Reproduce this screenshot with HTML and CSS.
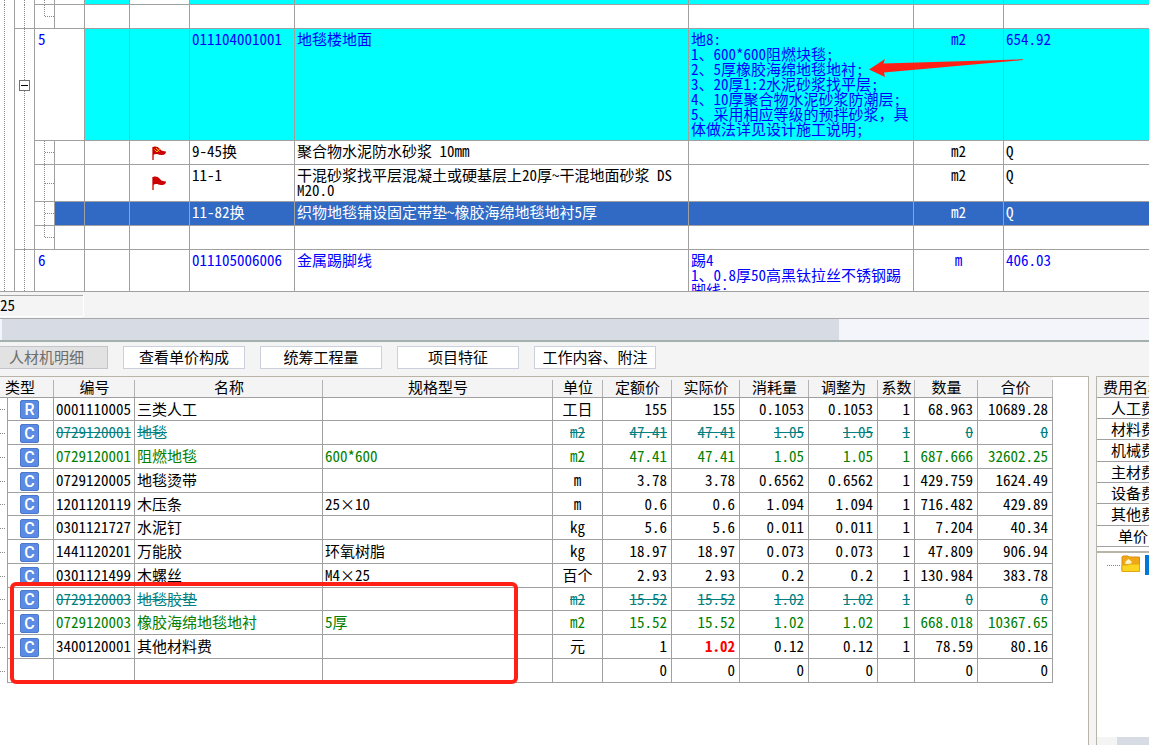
FILE: index.html
```html
<!DOCTYPE html>
<html lang="zh-CN">
<head>
<meta charset="utf-8">
<title>工程计价</title>
<link rel="stylesheet" href="styles.css">
</head>
<body>
<main class="app">
  <section class="bill">
    <table class="grid bill-table">
      <colgroup>
        <col class="w-root"><col class="w-branch"><col class="w-branch"><col class="w-index"><col class="w-mark"><col class="w-flag"><col class="w-code"><col class="w-name"><col class="w-feature"><col class="w-unit"><col>
      </colgroup>
      <tbody>
        <tr class="r-edge"><td class="trunk"></td><td class="trunk mid"></td><td class="trunk mid leaf"></td><td></td><td class="cyan"></td><td></td><td class="cyan"></td><td class="cyan"></td><td class="cyan"></td><td class="cyan"></td><td class="cyan"></td></tr>
        <tr class="r-one"><td class="trunk"></td><td class="trunk mid end"></td><td class="twig last"></td><td></td><td></td><td></td><td></td><td></td><td></td><td></td><td></td></tr>
        <tr class="r-item cyan-row"><td class="trunk"></td><td class="trunk mid toggle-cell"><button class="toggle" type="button" aria-label="折叠"></button></td><td colspan="2" class="no">5</td><td></td><td></td><td>011104001001</td><td>地毯楼地面</td><td>地8:<br>1、600*600阻燃块毯;<br>2、5厚橡胶海绵地毯地衬;<br>3、20厚1:2水泥砂浆找平层;<br>4、10厚聚合物水泥砂浆防潮层;<br>5、采用相应等级的预拌砂浆<span class="wide">，</span>具体做法详见设计施工说明;</td><td class="c">m2</td><td>654.92</td></tr>
        <tr class="r-one"><td class="trunk"></td><td class="trunk mid"></td><td class="twig"></td><td></td><td></td><td class="flag"><svg width="15" height="15" viewBox="0 0 15 15"><path d="M1 1v13" stroke="#c00" stroke-width="1.3"/><path d="M1 1c3-1 5 0 6.500 1.500C9 4 9 5 14 5.500C14 8 12 9.500 9 9C6 8.500 4 7 1 9z" fill="#c00"/><path d="M2.500 3.500l2.500 2.500 3-3.500M4 2l3.500 3.500" fill="none" stroke="#ffc800" stroke-width="1"/></svg></td><td>9-45换</td><td>聚合物水泥防水砂浆 10mm</td><td></td><td class="c">m2</td><td>Q</td></tr>
        <tr class="r-two"><td class="trunk"></td><td class="trunk mid"></td><td class="twig"></td><td></td><td></td><td class="flag"><svg width="15" height="15" viewBox="0 0 15 15"><path d="M1 1v13" stroke="#c00" stroke-width="1.3"/><path d="M1 1c3-1 5 0 6.500 1.500C9 4 9 5 14 5.500C14 8 12 9.500 9 9C6 8.500 4 7 1 9z" fill="#c00"/></svg></td><td>11-1</td><td>干混砂浆找平层混凝土或硬基层上20厚~干混地面砂浆 DS M20.0</td><td></td><td class="c">m2</td><td>Q</td></tr>
        <tr class="r-one selected"><td class="trunk"></td><td class="trunk mid"></td><td class="twig"></td><td></td><td></td><td></td><td>11-82换</td><td>织物地毯铺设固定带垫~橡胶海绵地毯地衬5厚</td><td></td><td class="c">m2</td><td>Q</td></tr>
        <tr class="r-one"><td class="trunk"></td><td class="trunk mid end"></td><td class="twig last"></td><td></td><td></td><td></td><td></td><td></td><td></td><td></td><td></td></tr>
        <tr class="r-cut blue"><td class="trunk end"></td><td class="trunk mid end"></td><td colspan="2" class="no">6</td><td></td><td></td><td>011105006006</td><td>金属踢脚线</td><td><div class="clip">踢4<br>1、0.8厚50高黑钛拉丝不锈钢踢脚线;</div></td><td class="c">m</td><td>406.03</td></tr>
      </tbody>
    </table>
    <svg class="arrow" width="156" height="20" viewBox="0 0 156 20" aria-hidden="true"><path d="M0 11.500L16 1l-1.500 4.500L154 1.300v.8L15 14.500l1 4.500z" fill="#ff2116"/></svg>
  </section>

  <div class="status"><input class="count" type="text" value="25" readonly aria-label="行数"></div>
  <div class="hscroll"><div class="thumb"></div></div>

  <nav class="tabs">
    <button type="button" class="tab active" disabled>人材机明细</button>
    <button type="button" class="tab">查看单价构成</button>
    <button type="button" class="tab">统筹工程量</button>
    <button type="button" class="tab">项目特征</button>
    <button type="button" class="tab">工作内容、附注</button>
  </nav>

  <div class="panels">
    <section class="detail">
      <table class="grid detail-table">
        <colgroup>
          <col class="d-tree"><col class="d-kind"><col class="d-code"><col class="d-name"><col class="d-spec"><col class="d-unit"><col class="d-quota"><col class="d-real"><col class="d-use"><col class="d-use"><col class="d-coef"><col class="d-qty"><col class="d-sum">
        </colgroup>
        <thead>
          <tr><th colspan="2" class="kind-head">类型</th><th>编号</th><th>名称</th><th>规格型号</th><th>单位</th><th>定额价</th><th>实际价</th><th>消耗量</th><th>调整为</th><th>系数</th><th>数量</th><th>合价</th></tr>
        </thead>
        <tbody>
          <tr><td></td><td><span class="badge">R</span></td><td>0001110005</td><td>三类人工</td><td></td><td>工日</td><td>155</td><td>155</td><td>0.1053</td><td>0.1053</td><td>1</td><td>68.963</td><td>10689.28</td></tr>
          <tr class="removed"><td></td><td><span class="badge">C</span></td><td>0729120001</td><td>地毯</td><td></td><td>m2</td><td>47.41</td><td>47.41</td><td>1.05</td><td>1.05</td><td>1</td><td>0</td><td>0</td></tr>
          <tr class="added"><td></td><td><span class="badge">C</span></td><td>0729120001</td><td>阻燃地毯</td><td>600*600</td><td>m2</td><td>47.41</td><td>47.41</td><td>1.05</td><td>1.05</td><td>1</td><td>687.666</td><td>32602.25</td></tr>
          <tr><td></td><td><span class="badge">C</span></td><td>0729120005</td><td>地毯烫带</td><td></td><td>m</td><td>3.78</td><td>3.78</td><td>0.6562</td><td>0.6562</td><td>1</td><td>429.759</td><td>1624.49</td></tr>
          <tr><td></td><td><span class="badge">C</span></td><td>1201120119</td><td>木压条</td><td>25×10</td><td>m</td><td>0.6</td><td>0.6</td><td>1.094</td><td>1.094</td><td>1</td><td>716.482</td><td>429.89</td></tr>
          <tr><td></td><td><span class="badge">C</span></td><td>0301121727</td><td>水泥钉</td><td></td><td>kg</td><td>5.6</td><td>5.6</td><td>0.011</td><td>0.011</td><td>1</td><td>7.204</td><td>40.34</td></tr>
          <tr><td></td><td><span class="badge">C</span></td><td>1441120201</td><td>万能胶</td><td>环氧树脂</td><td>kg</td><td>18.97</td><td>18.97</td><td>0.073</td><td>0.073</td><td>1</td><td>47.809</td><td>906.94</td></tr>
          <tr><td></td><td><span class="badge">C</span></td><td>0301121499</td><td>木螺丝</td><td>M4×25</td><td>百个</td><td>2.93</td><td>2.93</td><td>0.2</td><td>0.2</td><td>1</td><td>130.984</td><td>383.78</td></tr>
          <tr class="removed"><td></td><td><span class="badge">C</span></td><td>0729120003</td><td>地毯胶垫</td><td></td><td>m2</td><td>15.52</td><td>15.52</td><td>1.02</td><td>1.02</td><td>1</td><td>0</td><td>0</td></tr>
          <tr class="added"><td></td><td><span class="badge">C</span></td><td>0729120003</td><td>橡胶海绵地毯地衬</td><td>5厚</td><td>m2</td><td>15.52</td><td>15.52</td><td>1.02</td><td>1.02</td><td>1</td><td>668.018</td><td>10367.65</td></tr>
          <tr><td></td><td><span class="badge">C</span></td><td>3400120001</td><td>其他材料费</td><td></td><td>元</td><td>1</td><td class="changed">1.02</td><td>0.12</td><td>0.12</td><td>1</td><td>78.59</td><td>80.16</td></tr>
          <tr><td></td><td></td><td></td><td></td><td></td><td></td><td>0</td><td>0</td><td>0</td><td>0</td><td></td><td>0</td><td>0</td></tr>
        </tbody>
      </table>
      <div class="highlight"></div>
    </section>

    <aside class="fees">
      <table class="grid fee-table">
        <thead><tr><th>费用名称</th></tr></thead>
        <tbody>
          <tr><td>人工费</td></tr>
          <tr><td>材料费</td></tr>
          <tr><td>机械费</td></tr>
          <tr><td>主材费</td></tr>
          <tr><td>设备费</td></tr>
          <tr><td>其他费</td></tr>
          <tr><td class="deep">单价</td></tr>
        </tbody>
      </table>
      <div class="folder-tree">
        <span class="dots"></span>
        <svg width="20" height="18" viewBox="0 0 20 18" aria-hidden="true"><path d="M1 2L2 1h5l1 1h10.500v14H1z" fill="#f0a818" stroke="#d98f10"/><path d="M4.500 9V6.500l3-2.500 3 2.500V9z" fill="#fff3cc"/><path d="M1 10h6l1-1h10.500v7.500H1z" fill="#fbd51f" stroke="#e3a613"/></svg>
        <span class="node"></span>
      </div>
      <div class="fee-scroll"><button type="button" class="step" aria-label="向左"><svg width="6" height="8" viewBox="0 0 6 8"><path d="M6 0v8L1 4z" fill="#444"/></svg></button><div class="fee-thumb"></div></div>
    </aside>
  </div>
</main>
</body>
</html>
```
FILE: styles.css
```css
* { box-sizing: border-box; }

body {
  margin: 0;
  background: #f4f4f4;
  color: #000;
  font: 15px/15px "Noto Sans CJK SC", sans-serif;
  font-feature-settings: "hwid";
  overflow: hidden;
}

button, input { font: inherit; font-feature-settings: inherit; color: inherit; border-radius: 0; }

.app { display: flex; flex-direction: column; height: 100vh; }

.grid { border-collapse: separate; border-spacing: 0; table-layout: fixed; }
.grid td, .grid th { font-weight: 400; border: 0 solid #a0a0a0; border-width: 0 1px 1px 0; overflow: hidden; }

/* bill of quantities */
.bill { position: relative; background: #fff; }
.bill-table { width: 100%; }
.bill-table td { padding: 2px 0 0 2px; text-align: left; vertical-align: top; }
.bill-table td:last-child { border-right: 0; }
.w-root { width: 15px; }
.w-branch { width: 20px; }
.w-index { width: 30px; }
.w-mark { width: 45px; }
.w-flag { width: 60px; }
.w-code { width: 105px; }
.w-name { width: 394px; }
.w-feature { width: 225px; }
.w-unit { width: 90px; }

.r-edge { height: 5px; }
.bill-table .r-edge td { padding: 0; }
.r-one { height: 24px; }
.r-item { height: 112px; }
.r-two { height: 37px; }
.r-cut { height: 42px; }
.clip { height: 39px; overflow: hidden; }
.wide { font-feature-settings: normal; }

.bill-table .c { text-align: center; padding-left: 0; }
.bill-table .no { padding-left: 3px; background: #fff; }
.bill-table .flag { text-align: center; vertical-align: middle; padding: 1px 0 0; }
.flag svg { display: block; margin: 0 auto; }

.cyan, .cyan-row td:nth-child(n+4) { background: #0ff; }
.cyan-row, .blue { color: #00f; }
.selected td:nth-child(n+4) { background: #316ac5; color: #fff; }

.bill-table .trunk {
  padding: 0;
  border-bottom-width: 0;
  background: repeating-linear-gradient(#888 0 1px, #fff 1px 2px) 4px 0 / 1px 100% no-repeat;
}
.bill-table .mid { background-position: 9px 0; }
.bill-table .end, .bill-table .leaf { border-bottom-width: 1px; }
.bill-table .twig {
  background:
    repeating-linear-gradient(#888 0 1px, #fff 1px 2px) 9px 0 / 1px 100% no-repeat,
    repeating-linear-gradient(90deg, #888 0 1px, #fff 1px 2px) 10px 50% / 9px 1px no-repeat;
}
.bill-table .last {
  background:
    repeating-linear-gradient(#888 0 1px, #fff 1px 2px) 9px 0 / 1px 50% no-repeat,
    repeating-linear-gradient(90deg, #888 0 1px, #fff 1px 2px) 10px 50% / 9px 1px no-repeat;
}
.bill-table .toggle-cell { text-align: center; vertical-align: middle; }
.toggle {
  display: block;
  width: 11px;
  height: 11px;
  margin: 0 auto;
  padding: 0;
  border: 1px solid #707070;
  background: linear-gradient(#000, #000) center / 7px 1px no-repeat #fff;
}
.arrow { position: absolute; left: 869px; top: 58px; }

.status { height: 26px; padding-top: 3px; }
.count {
  display: block;
  width: 83px;
  height: 21px;
  padding: 0 0 4px;
  border: solid #a8a8a8;
  border-width: 1px 0 0;
  box-shadow: 0 1px #fff, 1px 0 #fff;
  background: transparent;
}
.hscroll { height: 24px; border: solid #a8a8a8; border-width: 1px 0 2px; border-bottom-color: #a4b0ae; background: #f4f5fa; padding-left: 2px; }
.thumb { width: 73%; height: 100%; background: #d7dbe4; }

/* tabs */
.tabs { display: flex; gap: 15px; padding: 4px 0 7px; }
.tab {
  width: 122px;
  height: 23px;
  margin: 0;
  padding: 0 0 2px;
  border: 1px solid #ccd0dc;
  background: #fff;
  white-space: nowrap;
}
.tab.active { width: 108px; border-left: 0; border-color: #c4c5ca; background: #e2e2e2; color: #6d6d6d; padding-right: 14px; }

/* lower panels */
.panels { display: flex; flex: 1; gap: 7px; min-height: 0; }
.detail { position: relative; flex: 1; min-width: 0; background: #fff; border: solid #b8b5a8; border-width: 1px 1px 0 0; }
.detail-table { width: 1053px; }
.grid thead tr { height: 21px; }
.grid th {
  padding: 0 0 2px;
  background: linear-gradient(#b4b4b4, #b4b4b4) right 3px / 1px 100% no-repeat #f4f4f4;
  border-right: 0;
  white-space: nowrap;
}
.grid .kind-head { padding-right: 14px; }
.detail-table td { white-space: nowrap; text-align: right; vertical-align: middle; padding: 0 4px 2px 0; }
.detail-table tbody tr { height: 24px; }
.detail-table tbody tr:nth-child(4n+1) { height: 23px; }
.detail-table td:nth-child(1) {
  border-bottom: 0;
  background: repeating-linear-gradient(90deg, #888 0 1px, #fff 1px 2px) 0 50% / 6px 1px no-repeat;
}
.detail-table td:nth-child(2) { padding: 1px 0 0 12px; }
.detail-table td:nth-child(3), .detail-table td:nth-child(4), .detail-table td:nth-child(5) { text-align: left; padding: 0 0 2px 2px; }
.detail-table td:nth-child(6) { text-align: center; padding: 0 0 2px; }
.d-tree { width: 8px; }
.d-kind { width: 46px; }
.d-code { width: 81px; }
.d-name { width: 188px; }
.d-spec { width: 230px; }
.d-unit { width: 50px; }
.d-quota { width: 69px; }
.d-real { width: 68px; }
.d-use { width: 69px; }
.d-coef { width: 37px; }
.d-qty { width: 63px; }
.d-sum { width: 75px; }

.badge {
  display: block;
  width: 19px;
  height: 19px;
  border: 1px solid #4a78cc;
  border-radius: 2px;
  background: #5b8be2;
  color: #fff;
  font: 500 16px/18px Roboto, sans-serif;
  text-align: center;
}
.removed td:nth-child(n+3) { color: #008080; text-decoration: line-through; }
.added { color: #008000; }
.detail-table .changed { color: #f00; font-weight: 700; }
.highlight { position: absolute; left: 10px; top: 205px; width: 508px; height: 102px; border: 4px solid #ff2116; border-radius: 6px; }

.fees { display: flex; flex-direction: column; width: 53px; background: #fff; border: solid #b8b5a8; border-width: 1px 0 0 1px; overflow: hidden; }
.fee-table { width: 150px; }
.fee-table th { text-align: left; padding-left: 6px; }
.fee-table td { padding: 0 0 2px 14px; white-space: nowrap; }
.fee-table tbody tr { height: 21px; }
.fee-table tbody tr:nth-child(3n) { height: 22px; }
.fee-table .deep { padding-left: 21px; }
.folder-tree { display: flex; flex: 1; align-items: flex-start; margin-top: 4px; padding: 2px 0 0 10px; border-top: 2px solid #b8b5a8; }
.dots { flex: none; width: 14px; height: 1px; margin-top: 10px; background: repeating-linear-gradient(90deg, #888 0 1px, #fff 1px 2px); }
.folder-tree svg { flex: none; }
.node { flex: none; width: 40px; height: 20px; margin-left: 4px; background: #0078d7; }
.fee-scroll { display: flex; height: 8px; overflow: hidden; background: #f4f4f4; }
.step { flex: none; width: 20px; height: 18px; padding: 5px 0 0 6px; border: 0; background: #f4f4f4; }
.step svg { display: block; }
.fee-thumb { flex: 1; background: #d7dbe4; }
```
